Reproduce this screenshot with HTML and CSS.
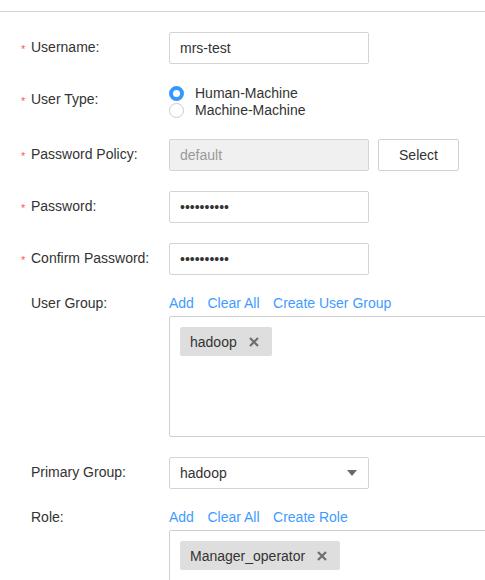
FILE: index.html
```html
<!DOCTYPE html>
<html>
<head>
<meta charset="utf-8">
<link rel="stylesheet" href="styles.css">
</head>
<body>
<div class="topbar"></div>
<form class="form">
  <div class="row">
    <div class="label"><span class="req">*</span>Username:</div>
    <input class="input" type="text" value="mrs-test">
  </div>
  <div class="row">
    <div class="label"><span class="req">*</span>User Type:</div>
    <div class="radios">
      <label class="radio"><span class="dot checked"></span>Human-Machine</label>
      <label class="radio"><span class="dot"></span>Machine-Machine</label>
    </div>
  </div>
  <div class="row">
    <div class="label"><span class="req">*</span>Password Policy:</div>
    <input class="input disabled" type="text" value="default" disabled>
    <button class="btn" type="button">Select</button>
  </div>
  <div class="row">
    <div class="label"><span class="req">*</span>Password:</div>
    <input class="input" type="password" value="1234567890">
  </div>
  <div class="row">
    <div class="label"><span class="req">*</span>Confirm Password:</div>
    <input class="input" type="password" value="1234567890">
  </div>
  <div class="row">
    <div class="label short"><span class="req"></span>User Group:</div>
    <div class="picker">
      <div class="links"><a>Add</a><a>Clear All</a><a>Create User Group</a></div>
      <div class="box tall">
        <span class="tag">hadoop<svg class="x" width="10" height="10" viewBox="0 0 10 10"><path d="M1 1L9 9M9 1L1 9" stroke="#6e6e6e" stroke-width="2.2" fill="none"/></svg></span>
      </div>
    </div>
  </div>
  <div class="row">
    <div class="label"><span class="req"></span>Primary Group:</div>
    <div class="select"><span>hadoop</span><span class="caret"></span></div>
  </div>
  <div class="row">
    <div class="label short"><span class="req"></span>Role:</div>
    <div class="picker">
      <div class="links"><a>Add</a><a>Clear All</a><a>Create Role</a></div>
      <div class="box">
        <span class="tag">Manager_operator<svg class="x" width="10" height="10" viewBox="0 0 10 10"><path d="M1 1L9 9M9 1L1 9" stroke="#6e6e6e" stroke-width="2.2" fill="none"/></svg></span>
      </div>
    </div>
  </div>
</form>
</body>
</html>
```
FILE: styles.css
```css
html, body {
  margin: 0;
  padding: 0;
  background: #fff;
  overflow: hidden;
}
body {
  width: 485px;
  height: 580px;
  font-family: "Liberation Sans", Arial, sans-serif;
  font-size: 14px;
  color: #333;
}
.topbar {
  height: 11px;
  border-bottom: 1px solid #d6d6d6;
}
.form {
  padding: 20px 0 0 20px;
  margin: 0;
}
.row {
  display: flex;
  align-items: flex-start;
  margin-bottom: 20px;
}
.label {
  width: 149px;
  flex: none;
  display: flex;
  line-height: 30px;
  color: #333;
}
.label.short {
  line-height: 16px;
}
.req {
  width: 11px;
  flex: none;
  color: #f55;
  font-size: 11px;
  padding-left: 1px;
  box-sizing: border-box;
  position: relative;
  top: 2px;
}
.input {
  box-sizing: border-box;
  width: 200px;
  height: 32px;
  border: 1px solid #d4d4d4;
  border-radius: 2px;
  padding: 0 10px;
  font-family: "Liberation Sans", Arial, sans-serif;
  font-size: 14px;
  color: #333;
  background: #fff;
  outline: none;
  margin: 0;
}
.input.disabled {
  background: #f0f0f0;
  color: #999;
}
.btn {
  box-sizing: border-box;
  width: 81px;
  height: 32px;
  margin: 0 0 0 9px;
  border: 1px solid #d0d0d0;
  border-radius: 2px;
  background: #fff;
  font-family: "Liberation Sans", Arial, sans-serif;
  font-size: 14px;
  color: #333;
  padding: 0;
}
.radios {
  padding-top: 1px;
  display: flex;
  flex-direction: column;
}
.radio {
  display: flex;
  align-items: center;
  height: 17px;
  line-height: 17px;
  color: #333;
}
.dot {
  box-sizing: border-box;
  width: 15px;
  height: 15px;
  border-radius: 50%;
  border: 1px solid #ccc;
  background: #fff;
  margin-right: 11px;
  flex: none;
}
.dot.checked {
  border: 4px solid #3399ff;
  background: #fff;
}
.picker {
  display: flex;
  flex-direction: column;
}
.links {
  display: flex;
  gap: 13.5px;
  line-height: 16px;
  margin-bottom: 5px;
  color: #3f9bff;
}
.links a {
  color: #3f9bff;
  cursor: pointer;
}
.box {
  box-sizing: border-box;
  width: 340px;
  height: 50px;
  border: 1px solid #cfcfcf;
  border-bottom: none;
  border-radius: 2px 2px 0 0;
  padding: 10px;
}
.box.tall {
  height: 121px;
  border-bottom: 1px solid #cfcfcf;
  border-radius: 2px;
}
.tag {
  display: inline-flex;
  align-items: center;
  height: 29px;
  padding: 0 13px 0 10px;
  background: #dedede;
  border-radius: 2px;
  color: #333;
}
.x {
  margin-left: 12px;
}
.select {
  box-sizing: border-box;
  width: 200px;
  height: 32px;
  border: 1px solid #d4d4d4;
  border-radius: 2px;
  padding: 0 11px 0 10px;
  display: flex;
  align-items: center;
  justify-content: space-between;
}
.caret {
  width: 0;
  height: 0;
  border-left: 5px solid transparent;
  border-right: 5px solid transparent;
  border-top: 6px solid #6a6a6a;
}
```
